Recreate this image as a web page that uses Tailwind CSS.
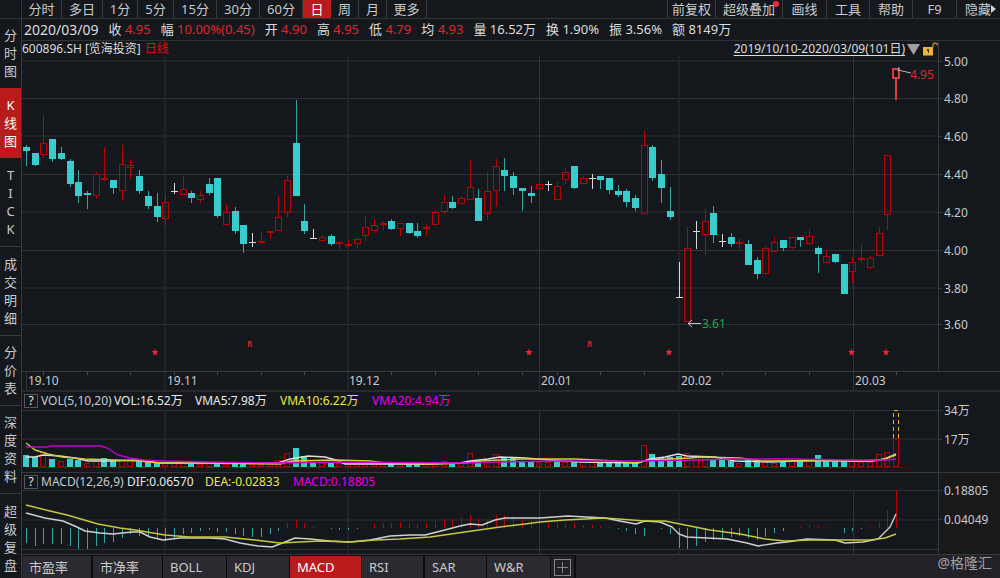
<!DOCTYPE html>
<html lang="zh-CN">
<head>
<meta charset="utf-8">
<meta name="viewport" content="width=device-width, initial-scale=1">
<title>600896.SH 日线</title>
<script src="https://cdn.jsdelivr.net/npm/@tailwindcss/browser@4"></script>
</head>
<body class="bg-[#14171c] font-['Noto_Sans','Noto_Sans_CJK_SC',sans-serif] text-[#c9cacc]">
<div class="flex h-screen min-h-[578px] flex-col overflow-hidden">

  <!-- Period and tool bar -->
  <nav class="flex h-[19px] shrink-0 border-b border-[#303236] pl-[21px] text-[13px] leading-[18px]">
    <div class="flex border-l border-[#303236]">
      <button class="w-[40px] border-r border-[#36383d]">分时</button>
      <button class="w-[41px] border-r border-[#36383d]">多日</button>
      <button class="w-[35px] border-r border-[#36383d]">1分</button>
      <button class="w-[36px] border-r border-[#36383d]">5分</button>
      <button class="w-[43px] border-r border-[#36383d]">15分</button>
      <button class="w-[43px] border-r border-[#36383d]">30分</button>
      <button class="w-[43px] border-r border-[#36383d]">60分</button>
      <button class="w-[28px] bg-[#b91a1c] text-white">日</button>
      <button class="w-[28px] border-r border-[#36383d]">周</button>
      <button class="w-[28px] border-r border-[#36383d]">月</button>
      <button class="w-[40px] border-r border-[#36383d]">更多</button>
    </div>
    <div class="ml-auto flex border-l border-[#36383d]">
      <button class="w-[48px] whitespace-nowrap border-r border-[#36383d]">前复权</button>
      <button class="relative w-[67px] whitespace-nowrap border-r border-[#36383d]">超级叠加<span class="absolute right-[3px] top-px size-[6px] rounded-full bg-[#f02a30]"></span></button>
      <button class="w-[44px] border-r border-[#36383d]">画线</button>
      <button class="w-[43px] border-r border-[#36383d]">工具</button>
      <button class="w-[43px] border-r border-[#36383d]">帮助</button>
      <button class="w-[44px] border-r border-[#36383d]">F9</button>
      <button class="flex w-[43px] items-center justify-end pr-[4px]">隐藏<svg class="h-[8px] w-[5px]" viewBox="0 0 5 8"><path d="M0 0L5 4L0 8Z" fill="#d0d0d0"/></svg></button>
    </div>
  </nav>

  <div class="flex min-h-0 flex-1">
    <!-- View switcher -->
    <aside class="-mt-px flex w-[22px] shrink-0 flex-col overflow-hidden border-r border-[#36383d] text-center text-[13px] leading-[18px]">
      <button class="flex shrink-0 flex-col items-center px-[3px] py-2"><span>分</span><span>时</span><span>图</span></button>
      <button class="flex shrink-0 flex-col items-center bg-[#b91a1c] px-[3px] py-2 text-white"><span>K</span><span>线</span><span>图</span></button>
      <button class="flex shrink-0 flex-col items-center border-b border-[#36383d] px-[3px] py-2"><span>T</span><span>I</span><span>C</span><span>K</span></button>
      <button class="flex shrink-0 flex-col items-center border-b border-[#36383d] px-[3px] py-2"><span>成</span><span>交</span><span>明</span><span>细</span></button>
      <button class="flex shrink-0 flex-col items-center border-b border-[#36383d] px-[3px] pb-2 pt-[7px]"><span>分</span><span>价</span><span>表</span></button>
      <button class="flex shrink-0 flex-col items-center border-b border-[#36383d] px-[3px] pb-2 pt-[7px]"><span>深</span><span>度</span><span>资</span><span>料</span></button>
      <button class="flex shrink-0 flex-col items-center px-[3px] py-2"><span>超</span><span>级</span><span>复</span><span>盘</span></button>
    </aside>

    <main class="flex min-w-0 flex-1 flex-col">
      <!-- Quote of the day -->
      <div class="flex h-[22px] shrink-0 items-center gap-[10px] whitespace-nowrap border-b border-[#303236] pl-[2px] text-[13px] text-[#dcdddf]">
        <span class="text-[14px]">2020/03/09</span>
        <span>收 <b class="font-normal text-[#e0262e]">4.95</b></span>
        <span>幅 <b class="font-normal text-[#e0262e]">10.00%(0.45)</b></span>
        <span>开 <b class="font-normal text-[#e0262e]">4.90</b></span>
        <span>高 <b class="font-normal text-[#e0262e]">4.95</b></span>
        <span>低 <b class="font-normal text-[#e0262e]">4.79</b></span>
        <span>均 <b class="font-normal text-[#e0262e]">4.93</b></span>
        <span>量 16.52万</span>
        <span>换 1.90%</span>
        <span>振 3.56%</span>
        <span>额 8149万</span>
      </div>

      <!-- Price -->
      <section class="flex min-h-0 flex-1 border-b border-[#36383d]">
        <div class="relative min-w-0 flex-1">
          <svg id="price" class="absolute inset-0 size-full" viewBox="22 41 916 330" preserveAspectRatio="none"></svg>
          <header class="relative flex h-[16px] items-center whitespace-nowrap text-[12px] leading-[16px] text-[#dcdddf]">
            <span>600896.SH</span>
            <span class="ml-[3px]">[览海投资]</span>
            <span class="ml-[4px] text-[#e00c10]">日线</span>
            <a href="#range" class="ml-auto underline underline-offset-2">2019/10/10-2020/03/09(101日)</a>
            <button aria-label="选择区间" class="ml-[2px]"><svg class="h-[11px] w-[13px]" viewBox="0 0 13 11"><path d="M0 0H13L6.500 11Z" fill="#a0a0a2"/></svg></button>
            <button aria-label="锁定" class="ml-[3px]"><svg class="h-[14px] w-[15px]" viewBox="0 0 15 14"><path d="M10 5V3.500Q10 1 12.200 1T14.500 3.500" fill="none" stroke="#a8842c" stroke-width="1.500"/><rect x="0" y="5" width="10" height="8.500" fill="#f2b53a"/><path d="M4 7h2v4h-1v-2h-1Z" fill="#4a3410"/></svg></button>
          </header>
          <div id="notes"></div>
        </div>
        <div class="relative w-[62px] shrink-0 border-l border-[#36383d] text-[12px] leading-4" data-axis="41,330" data-labels="5.00:61 4.80:98 4.60:136 4.40:174 4.20:212 4.00:250 3.80:288 3.60:324"></div>
      </section>

      <!-- Dates -->
      <section class="relative h-[20px] shrink-0 border-b-2 border-[#26282c] text-[12px] leading-[18px]">
        <div class="relative mr-[62px] h-full" id="dates">
          <svg id="ticks" class="absolute inset-0 size-full" viewBox="22 372 916 18" preserveAspectRatio="none"></svg>
        </div>
      </section>

      <!-- Volume -->
      <section class="flex h-[81px] shrink-0 border-b border-[#36383d]">
        <div class="relative min-w-0 flex-1">
          <svg id="volume" class="absolute inset-0 size-full" viewBox="22 392 916 80" preserveAspectRatio="none"></svg>
          <header class="relative flex h-[18px] items-center whitespace-nowrap pl-[2px] text-[12px] leading-[18px] text-[#e8e9eb]">
            <button class="size-[14px] border border-[#55575c] text-center leading-[12px]">?</button>
            <span class="ml-[3px] w-[73px] text-[#c9cacc]">VOL(5,10,20)</span>
            <span class="w-[81px]">VOL:16.52万</span>
            <span class="w-[85px]">VMA5:7.98万</span>
            <span class="w-[92px] text-[#eaea40]">VMA10:6.22万</span>
            <span class="text-[#e800e8]">VMA20:4.94万</span>
          </header>
        </div>
        <div class="relative w-[62px] shrink-0 border-l border-[#36383d] text-[12px] leading-4" data-axis="392,80" data-labels="34万:410 17万:439"></div>
      </section>

      <!-- MACD -->
      <section class="flex h-[82px] shrink-0 border-b border-[#36383d]">
        <div class="relative min-w-0 flex-1">
          <svg id="macd" class="absolute inset-0 size-full" viewBox="22 473 916 81" preserveAspectRatio="none"></svg>
          <header class="relative flex h-[18px] items-center whitespace-nowrap pl-[2px] text-[12px] leading-[18px] text-[#e8e9eb]">
            <button class="size-[14px] border border-[#55575c] text-center leading-[12px]">?</button>
            <span class="ml-[3px] w-[86px] text-[#c9cacc]">MACD(12,26,9)</span>
            <span class="w-[78px]">DIF:0.06570</span>
            <span class="w-[88px] text-[#eaea40]">DEA:-0.02833</span>
            <span class="text-[#e800e8]">MACD:0.18805</span>
          </header>
        </div>
        <div class="relative w-[62px] shrink-0 border-l border-[#36383d] bg-[#1a1919] text-[12px] leading-4" data-axis="473,81" data-labels="0.18805:490 0.04049:519"></div>
      </section>

      <!-- Indicator tabs -->
      <footer class="flex h-[23px] shrink-0 bg-[#222127] pl-px text-[13px] leading-[22px]">
        <button class="w-[70px] border-r-2 border-t border-[#0c0c0e] bg-[#2b2a30] pl-[6px] text-left">市盈率</button>
        <button class="w-[70px] border-r border-t border-[#0c0c0e] bg-[#2b2a30] pl-[7px] text-left">市净率</button>
        <button class="w-[64px] border-r border-t border-[#0c0c0e] bg-[#2b2a30] pl-[7px] text-left">BOLL</button>
        <button class="w-[63px] border-r border-t border-[#0c0c0e] bg-[#2b2a30] pl-[7px] text-left">KDJ</button>
        <button class="w-[72px] border-r border-t border-[#0c0c0e] bg-[#b91a1c] pl-[7px] text-left text-white">MACD</button>
        <button class="w-[63px] border-r-2 border-t border-[#0c0c0e] bg-[#2b2a30] pl-[7px] text-left">RSI</button>
        <button class="w-[62px] border-r border-t border-[#0c0c0e] bg-[#2b2a30] pl-[7px] text-left">SAR</button>
        <button class="w-[64px] border-r border-t border-[#0c0c0e] bg-[#2b2a30] pl-[7px] text-left">W&amp;R</button>
        <button aria-label="添加指标" class="flex w-[25px] items-center justify-center border-r-2 border-t border-[#0c0c0e]"><svg class="size-[17px]" viewBox="0 0 17 17" fill="none" stroke="#85868a" shape-rendering="crispEdges"><rect x="0.500" y="0.500" width="16" height="16"/><path d="M3 8.500H14M8.500 3V14"/></svg></button>
        <span class="ml-auto pr-[8px] text-[14px] leading-[16px] text-[#a2a2a5]">@格隆汇</span>
      </footer>
    </main>
  </div>
</div>

<script>
const CYAN = '#38cccc', RED = '#b40406', WHITE = '#d8d8d8';
const left = i => Math.round(23 + 8.7 * i);
const rect = (x, y, w, h, f) => `<rect x="${x}" y="${y}" width="${w}" height="${h}" fill="${f}"/>`;
const box = (x, y, w, h, s) => `<rect x="${x + .5}" y="${y + .5}" width="${w - 1}" height="${Math.max(h - 1, 1)}" fill="none" stroke="${s}"/>`;
const crisp = s => `<g shape-rendering="crispEdges">${s}</g>`;
const line = (pts, c) => `<polyline points="${pts}" fill="none" stroke="${c}" stroke-width="1.4" stroke-linejoin="round"/>`;

// Month boundaries: x, width of rule
const months = [[164, 2], [347, 2], [539, 1], [678, 2], [853, 1]];
const rule = w => w === 2 ? '#212328' : '#303236';
const verticals = (y0, y1) => months.map(([x, w]) => rect(x, y0, w, y1 - y0, rule(w))).join('');
const horizontals = ys => ys.map(([y, w]) => rect(22, y, 916, w, rule(w))).join('');

// Candles: kind (c falling, r rising, w unchanged), high, body top, body bottom, low
const candles = `c145,147,151,166 c153,153,165,166 r115,143,155,158 c139,139,159,162 c147,153,159,160 c159,161,184,187 c170,182,196,203 c191,193,195,209 r172,174,196,199 r147,178,180,181
c180,180,188,194 r145,164,191,201 r159,165,168,179 c170,176,191,194 c191,196,206,209 c193,206,217,222 r195,202,219,226 w183,191,192,194 r176,189,195,195 c191,193,198,203
r191,195,200,203 c178,184,193,195 c178,178,216,218 r204,212,225,225 c207,211,231,234 c225,225,244,253 w233,242,243,247 r231,241,243,243 r231,231,233,239 r196,217,231,231
r176,180,213,218 c100,143,196,196 c204,221,231,234 w229,238,239,239 r235,237,241,242 c234,236,244,246 r241,242,244,249 r240,244,246,247 r237,239,244,249 r215,227,236,241
r219,225,231,233 r221,223,225,230 c219,221,229,230 r223,223,229,236 c223,223,233,234 c223,231,236,238 r225,227,229,236 r210,212,225,225 r195,202,212,214 c196,202,208,209
r196,198,204,204 r160,187,200,200 c189,198,221,221 r172,191,214,220 r159,166,191,207 c158,170,176,191 c172,176,188,195 c188,188,191,211 c186,193,196,203 r178,184,189,197
w181,184,185,191 r182,186,200,200 r168,172,180,184 c166,166,188,189 r176,178,184,184 w174,178,179,189 c176,176,180,189 c178,178,190,194 c185,191,195,197 c189,191,202,207
c195,198,208,211 r131,145,214,214 c145,147,178,181 c160,174,188,203 c187,211,217,220 w262,297,298,298 r227,248,322,322 w221,231,232,249 r209,221,235,255 c206,213,235,243
w234,241,242,247 c233,237,244,247 r238,242,244,249 c240,244,265,265 c257,260,274,279 r246,248,274,274 r237,242,252,252 c240,240,248,251 r237,237,248,249 c237,237,240,247
r229,236,244,245 c246,248,254,273 r250,256,263,263 c254,254,262,263 c264,264,294,294 r257,262,272,283 r244,258,260,263 r256,258,268,269 r227,233,256,256 r155,155,215,230`.split(/\s+/);

const star = x => {
  let p = '';
  for (let k = 0; k < 10; k++) {
    const r = k % 2 ? 1.6 : 3.8, a = Math.PI * k / 5;
    p += `${(x + r * Math.sin(a)).toFixed(1)},${(352.3 - r * Math.cos(a)).toFixed(1)} `;
  }
  return `<polygon points="${p}" fill="#f0282e"/>`;
};

let s = horizontals([[60, 2], [98, 1], [135, 2], [174, 1], [211, 2], [250, 1], [287, 2], [324, 1]]) + verticals(56, 371);
candles.forEach((c, i) => {
  const [h, t, b, l] = c.slice(1).split(',').map(Number), x = left(i);
  if (c[0] === 'c') s += rect(x + 3, h, 1, l - h, '#30a5a6') + rect(x, t, 7, b - t, CYAN);
  else if (c[0] === 'w') s += rect(x + 3, h, 1, l - h, WHITE) + rect(x, t, 7, 1, WHITE);
  else s += rect(x + 3, h, 1, t - h, RED) + rect(x + 3, b, 1, l - b, RED) + box(x, t, 7, b - t, RED);
});
s += rect(895, 78, 2, 22, '#d83c42') + `<rect x="893" y="69" width="6" height="9" fill="none" stroke="#d83c42" stroke-width="2"/>`;
price.innerHTML = crisp(s) +
  `<path d="M898 70L911 73M898 71L899 67" fill="none" stroke="#b8b8b8"/>` +
  `<path d="M701 323.500H688M692 320L688 323.500L692 327" fill="none" stroke="#c8c0c8"/>` +
  [155, 529, 669, 851.5, 886].map(star).join('');

const note = (text, x, y, cls) => `<span class="absolute -translate-y-1/2 ${cls}" style="left:${(x - 22) / 9.16}%;top:${(y - 41) / 3.3}%">${text}</span>`;
notes.innerHTML = note('4.95', 910, 75, 'text-[12px] leading-4 text-[#e0262e]') + note('3.61', 702, 324, 'text-[12px] leading-4 text-[#1fa848]') +
  note('R', 247, 344, 'text-[8px] leading-3 font-bold text-[#c8242c]') + note('R', 587, 344, 'text-[8px] leading-3 font-bold text-[#c8242c]');

// Date rule
s = months.map(([x, w]) => rect(x, 372, w, 18, rule(w))).join('') + rect(26, 372, 1, 18, '#303236');
[2, 7, 12, 17, 22, 27, 32, 42, 47, 52, 57, 61, 66, 71, 80, 85, 90, 100].forEach(i => s += rect(left(i) + 3, 372, 1, 3, '#4a4c50'));
ticks.innerHTML = crisp(s);
dates.insertAdjacentHTML('beforeend', [['19.10', 28], ['19.11', 167], ['19.12', 349], ['20.01', 541], ['20.02', 681], ['20.03', 855]]
  .map(([t, x]) => `<span class="absolute top-0" style="left:${(x - 22) / 9.16}%">${t}</span>`).join(''));

// Volume bars
const vols = `c12 c10 r15 c8 r6 c8 c7 r4 r6 c9 c6 r7 r7 c6 c5 c5 r4 r4 r4 c4 r3 r4 c4 r3 c3 c3 r3 r3 r3 r7 r14 c19 c11 c5 r4 c4 r4 r4 r4 r5
r5 r4 c4 r4 c3 c3 r3 r5 r6 c4 r4 r14 c7 r6 r13 c10 c9 c6 c5 r5 r5 c6 r5 c6 r6 r5 c4 c4 c4 c5 c4 r22 c13 c10 c10 c11 r14 r8 r10 c8
c7 c6 r4 c8 c7 r5 r4 c6 r7 c7 r8 c12 c7 c6 c6 r6 r5 r5 r13 r15 r29`.split(/\s+/);
s = horizontals([[410, 1], [438, 2]]) + verticals(410, 472);
vols.forEach((v, i) => {
  const h = +v.slice(1), x = left(i);
  s += v[0] === 'c' ? rect(x, 467 - h, 6, h, CYAN) : box(x, 467 - h, 6, h, RED);
});
s += '<path d="M26 467.500H909" stroke="#7c0a0c" stroke-dasharray="1 1"/><path d="M893.500 438V410.500H898.500V438" fill="none" stroke="#eab020" stroke-dasharray="4 3"/>';
volume.innerHTML = crisp(s) +
  line('26,457 35,457 43,455 60,456 75,458 88,461 110,461 140,460 160,463 278,463 290,459 308,456 325,457 336,460 345,464 430,464 460,463 470,461 488,459 500,457 525,458 550,460 580,462 638,463 650,459 665,457 678,454 687,456 715,457 735,461 770,462 820,460 850,461 872,461 885,459 896,454', '#dedede') +
  line('26,443 35,450 48,454 62,457 85,459 115,460 140,461 160,463 200,463 280,464 292,461 335,460 370,461 385,463 430,464 465,463 480,461 500,460 520,459 575,459 615,461 635,463 650,460 690,458 700,457 740,458 760,461 860,461 880,460 890,457 896,455', '#d0d03a') +
  line('26,447 48,447 49,446 101,446 107,448 118,455 130,458 143,460 165,461 210,462 280,463 330,462 468,463 495,462 560,461 640,461 700,460 730,459 790,459 850,460 885,460 896,459', '#c800c8');

// MACD histogram; positive values rise from the zero line
const hist = [-15,-18,-16,-16,-16,-18,-21,-21,-18,-15,-14,-10,-6,-8,-9,-11,-13,-10,-6,-5,-3,-2,-4,-4,-6,-8,-9,-9,-6,-3,
  5,8,5,2,0,-1,-2,-2,-1,1,4,5,5,6,5,4,5,7,9,9,11,13,9,9,13,13,12,9,7,6,5,5,4,5,3,3,2,1,-1,-3,-6,-8,0,-1,-6,-20,-21,-18,-14,-12,
  -10,-9,-8,-10,-12,-9,-5,-3,0,1,3,2,1,0,-5,-3,-1,1,6,18,38];
s = horizontals([[490, 1], [519, 2], [549, 1]]) + verticals(490, 554);
hist.forEach((v, i) => s += rect(left(i) + 3, v > 0 ? 528 - v : 528, 1, Math.abs(v), v > 0 ? RED : '#30a5a6'));
macd.innerHTML = crisp(s) +
  line('26,513 45,518 63,521 77,527 85,531 100,533 113,534 132,532 140,532 150,537 163,540 180,538 210,538 225,539 240,543 258,546 272,547 285,542 295,538 310,539 330,541 350,542 370,540 390,536 410,535 425,535 445,530 460,526 470,524 482,525 495,520 505,518 540,518 568,516 605,518 625,522 636,524 645,521 660,522 672,527 679,534 687,537 727,539 747,543 758,546 777,543 787,542 807,539 835,540 845,543 863,542 878,539 890,527 896,514', '#cfcfcf') +
  line('26,505 50,511 67,515 98,524 120,528 135,530 165,535 190,537 225,537 255,540 280,543 300,542 320,541 350,542 375,540 400,539 430,537 465,532 500,527 525,524 540,522 565,520 605,518 645,521 665,521 680,524 710,530 740,534 765,539 785,541 810,540 870,540 885,538 896,534', '#c8c83a');

// Value axes
document.querySelectorAll('[data-axis]').forEach(el => {
  const [y0, h] = el.dataset.axis.split(',').map(Number);
  el.innerHTML = el.dataset.labels.split(' ').map(l => {
    const [t, y] = l.split(':');
    return `<span class="absolute left-0 flex -translate-y-1/2 items-center gap-[2px]" style="top:${(y - y0 + .5) / h * 100}%"><i class="h-px w-[3px] bg-[#36383d]"></i>${t}</span>`;
  }).join('');
});
</script>
</body>
</html>
